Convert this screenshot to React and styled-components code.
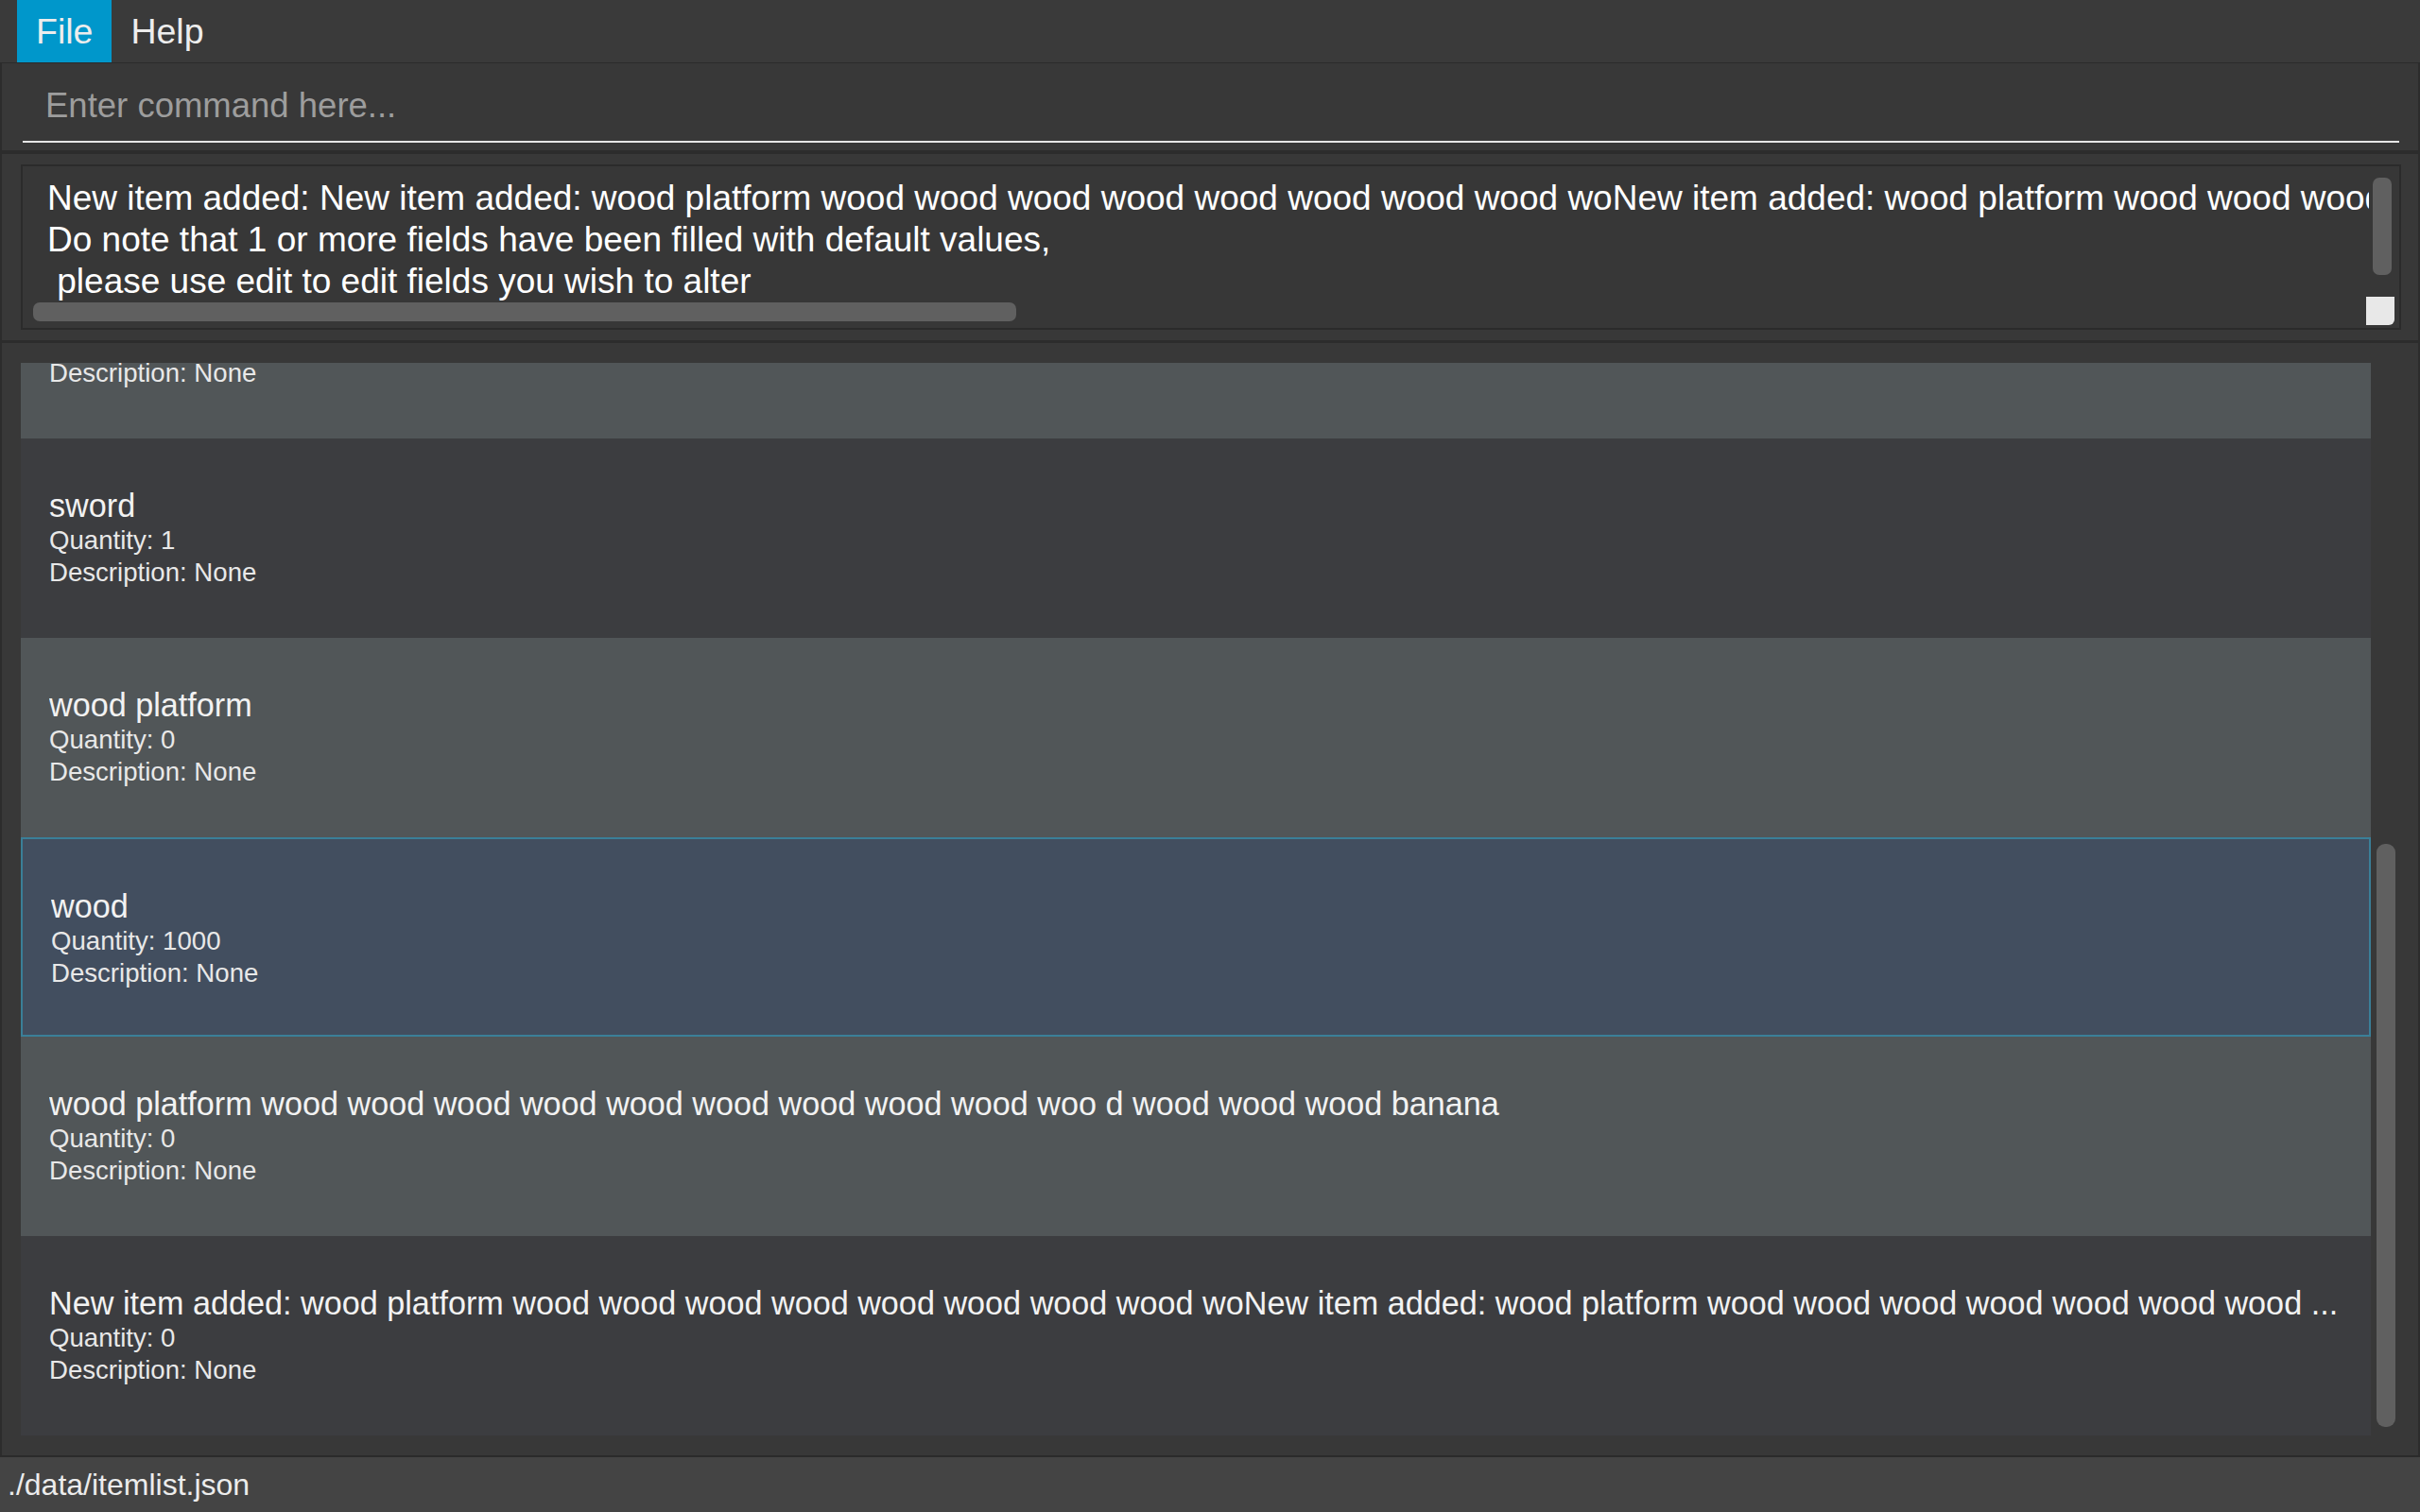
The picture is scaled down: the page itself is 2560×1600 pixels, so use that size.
import React from 'react';
import styled, { createGlobalStyle } from 'styled-components';

const GlobalStyle = createGlobalStyle`
  html, body {
    margin: 0;
    padding: 0;
    height: 100%;
    background: #383838;
  }
  #root {
    height: 100%;
  }
  body {
    font-family: 'Liberation Sans', Arial, sans-serif;
  }
`;

const Window = styled.div`
  display: flex;
  flex-direction: column;
  height: 100vh;
  background: #383838;
  overflow: hidden;
`;

const MenuBar = styled.nav`
  display: flex;
  align-items: stretch;
  height: 66px;
  padding-left: 18px;
  background: #3a3a3a;
  border-bottom: 1px solid #2b2b2b;
`;

const MenuItem = styled.div`
  display: flex;
  align-items: center;
  padding: 0 20px;
  font-size: 37.5px;
  color: #ededed;
  background: ${(p) => (p.$active ? '#0097cb' : 'transparent')};
`;

const CommandPanel = styled.div`
  height: 92px;
  box-sizing: border-box;
  padding: 24px 20px 0 22px;
  border-left: 2px solid #2c2c2c;
  border-right: 2px solid #2c2c2c;
  background: #383838;
`;

const CommandInput = styled.input`
  display: block;
  width: 100%;
  height: 60px;
  box-sizing: border-box;
  padding: 0 0 16px 24px;
  background: transparent;
  border: none;
  border-bottom: 2px solid #e6e6e6;
  color: #fff;
  font-family: 'Liberation Sans', Arial, sans-serif;
  font-size: 36.5px;
  outline: none;

  &::placeholder {
    color: #9d9d9d;
  }
`;

const ResultPanel = styled.div`
  padding: 11px 18px 11px 20px;
  border: 2px solid #2c2c2c;
  border-top-width: 4px;
  border-bottom: none;
  background: #383838;
`;

const ResultBox = styled.div`
  position: relative;
  height: 175px;
  box-sizing: border-box;
  border: 2px solid #2b2b2b;
  background: #373737;
  padding: 12px 0 0 26px;
`;

const ResultText = styled.div`
  margin-right: 32px;
  overflow: hidden;
  white-space: pre;
  font-size: 37px;
  line-height: 44px;
  color: #ffffff;
`;

const HScroll = styled.div`
  position: absolute;
  left: 11px;
  bottom: 7px;
  width: 1040px;
  height: 20px;
  border-radius: 7px;
  background: #606060;
`;

const VScroll = styled.div`
  position: absolute;
  right: 8px;
  top: 12px;
  width: 20px;
  height: 103px;
  border-radius: 7px;
  background: #606060;
`;

const Corner = styled.div`
  position: absolute;
  right: 5px;
  bottom: 3px;
  width: 30px;
  height: 30px;
  border-radius: 0 0 6px 0;
  background: #e8e8e8;
`;

const ListPanel = styled.div`
  position: relative;
  flex: 1;
  min-height: 0;
  display: flex;
  flex-direction: column;
  padding: 21px 50px 19px 20px;
  border-left: 2px solid #2c2c2c;
  border-right: 2px solid #2c2c2c;
  border-top: 3px solid #2c2c2c;
  background: #383838;
`;

const ListViewport = styled.div`
  flex: 1;
  overflow: hidden;
`;

const Cell = styled.div`
  height: 211px;
  box-sizing: border-box;
  margin-top: ${(p) => (p.$offset ? `-${p.$offset}px` : '0')};
  padding: 51px 30px 0 30px;
  background: ${(p) => (p.$selected ? '#424e5f' : p.$light ? '#515658' : '#3c3d40')};
  border: ${(p) => (p.$selected ? '2px solid #3a7f98' : 'none')};
`;

const Name = styled.div`
  font-size: 34.2px;
  line-height: 40px;
  color: #f2f2f2;
  white-space: nowrap;
  overflow: hidden;
`;

const Detail = styled.div`
  font-size: 27.6px;
  line-height: 34px;
  color: #e8e8e8;
`;

const ListScroll = styled.div`
  position: absolute;
  right: 24px;
  top: 530px;
  width: 20px;
  height: 617px;
  border-radius: 9px;
  background: #606060;
`;

const StatusBar = styled.div`
  height: 60px;
  box-sizing: border-box;
  display: flex;
  align-items: center;
  padding-left: 8px;
  border-top: 2px solid #2b2b2b;
  background: #444444;
  font-size: 32px;
  color: #ececec;
`;

const items = [
  { name: 'banana', qty: 0 },
  { name: 'sword', qty: 1 },
  { name: 'wood platform', qty: 0 },
  { name: 'wood', qty: 1000, selected: true },
  {
    name: 'wood platform wood wood wood wood wood wood wood wood wood woo d wood wood wood banana',
    qty: 0,
  },
  {
    name:
      'New item added: wood platform wood wood wood wood wood wood wood wood woNew item added: wood platform wood wood wood wood wood wood wood ...',
    qty: 0,
  },
];

const resultLines = [
  'New item added: New item added: wood platform wood wood wood wood wood wood wood wood woNew item added: wood platform wood wood wood wood wood wood wood wood woo d wood wood wood banana',
  'Do note that 1 or more fields have been filled with default values,',
  ' please use edit to edit fields you wish to alter',
].join('\n');

export default function App() {
  return (
    <Window>
      <GlobalStyle />
      <MenuBar>
        <MenuItem $active>File</MenuItem>
        <MenuItem>Help</MenuItem>
      </MenuBar>

      <CommandPanel>
        <CommandInput placeholder="Enter command here..." />
      </CommandPanel>

      <ResultPanel>
        <ResultBox>
          <ResultText>{resultLines}</ResultText>
          <HScroll />
          <VScroll />
          <Corner />
        </ResultBox>
      </ResultPanel>

      <ListPanel>
        <ListViewport>
          {items.map((item, i) => (
            <Cell
              key={i}
              $offset={i === 0 ? 131 : 0}
              $light={i % 2 === 0}
              $selected={item.selected}
            >
              <Name>{item.name}</Name>
              <Detail>Quantity: {item.qty}</Detail>
              <Detail>Description: None</Detail>
            </Cell>
          ))}
        </ListViewport>
        <ListScroll />
      </ListPanel>

      <StatusBar>./data/itemlist.json</StatusBar>
    </Window>
  );
}
